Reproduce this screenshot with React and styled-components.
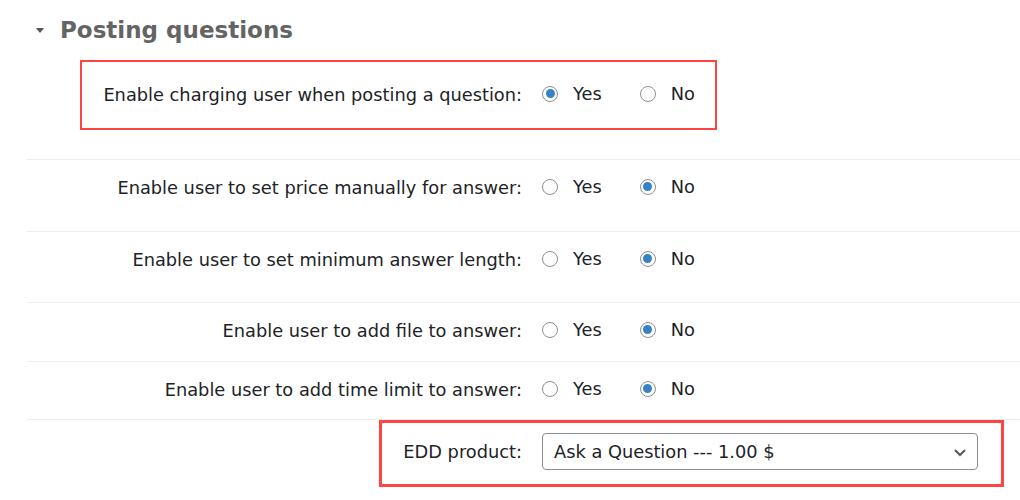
import React from 'react';
import styled, { createGlobalStyle } from 'styled-components';

const GlobalStyle = createGlobalStyle`
  body {
    margin: 0;
    background: #fff;
    font-family: "DejaVu Sans", Verdana, sans-serif;
    color: #1d2327;
  }
`;

const Page = styled.div`
  padding-left: 27px;
  width: 993px;
`;

const Heading = styled.h2`
  display: flex;
  align-items: center;
  gap: 16px;
  margin: 15px 0 0;
  height: 30px;
  padding-left: 9px;
  font-size: 23px;
  font-weight: bold;
  color: #646464;
`;

const Caret = styled.span`
  width: 0;
  height: 0;
  border-left: 4px solid transparent;
  border-right: 4px solid transparent;
  border-top: 5px solid #555;
`;

const Row = styled.div`
  padding: ${(p) => p.$top}px 0 ${(p) => p.$bottom}px;
  border-bottom: ${(p) => (p.$line ? '1px solid #ececec' : 'none')};
`;

const Field = styled.div`
  display: grid;
  grid-template-columns: ${(p) => p.$labelWidth}px auto;
  column-gap: 20px;
  align-items: center;
  line-height: 20px;
`;

const Highlight = styled.div`
  margin-left: ${(p) => p.$offset}px;
  width: ${(p) => p.$width}px;
  border: ${(p) => p.$border}px solid #f44;
  box-sizing: border-box;
  padding: ${(p) => p.$pad};
`;

const Label = styled.div`
  text-align: right;
  font-size: 17.8px;
  white-space: nowrap;
`;

const Choices = styled.div`
  display: flex;
  align-items: center;
  font-size: 17.8px;
`;

const Choice = styled.label`
  display: flex;
  align-items: center;
  gap: 15px;
  margin-right: 38px;
  margin-top: -3px;
`;

const Radio = styled.span`
  width: 16px;
  height: 16px;
  box-sizing: border-box;
  border: 1px solid #8c8f94;
  border-radius: 50%;
  display: flex;
  align-items: center;
  justify-content: center;
  background: #fff;

  &::before {
    content: '';
    width: 9px;
    height: 9px;
    border-radius: 50%;
    background: ${(p) => (p.$checked ? '#3582c4' : 'transparent')};
  }
`;

const Select = styled.div`
  width: 436px;
  height: 37px;
  box-sizing: border-box;
  border: 1px solid #8c8f94;
  border-radius: 4px;
  display: flex;
  align-items: center;
  justify-content: space-between;
  padding: 0 10px 0 11px;
  font-size: 17.8px;
  background: #fff;
`;

const YesNo = ({ value }) => (
  <Choices>
    <Choice>
      <Radio $checked={value === 'yes'} />
      Yes
    </Choice>
    <Choice>
      <Radio $checked={value === 'no'} />
      No
    </Choice>
  </Choices>
);

const rows = [
  { label: 'Enable user to set price manually for answer:', bottom: 33 },
  { label: 'Enable user to set minimum answer length:', bottom: 32 },
  { label: 'Enable user to add file to answer:', bottom: 20 },
  { label: 'Enable user to add time limit to answer:', bottom: 19 },
];

const App = () => (
  <>
    <GlobalStyle />
    <Page>
      <Heading>
        <Caret />
        Posting questions
      </Heading>

      <Row $top={15} $bottom={29} $line>
        <Highlight $offset={53} $width={637} $border={2} $pad="23px 0">
          <Field $labelWidth={440}>
            <Label>Enable charging user when posting a question:</Label>
            <YesNo value="yes" />
          </Field>
        </Highlight>
      </Row>

      {rows.map((r) => (
        <Row key={r.label} $top={18} $bottom={r.bottom} $line>
          <Field $labelWidth={495}>
            <Label>{r.label}</Label>
            <YesNo value="no" />
          </Field>
        </Row>
      ))}

      <Row $top={0} $bottom={0}>
        <Highlight $offset={352} $width={625} $border={3} $pad="10px 0 14px">
          <Field $labelWidth={140}>
            <Label>EDD product:</Label>
            <Select>
              <span>Ask a Question --- 1.00 $</span>
              <svg width="14" height="14" viewBox="0 0 14 14">
                <polyline points="2,5 7,10 12,5" fill="none" stroke="#50575e" strokeWidth="2" />
              </svg>
            </Select>
          </Field>
        </Highlight>
      </Row>
    </Page>
  </>
);

export default App;
